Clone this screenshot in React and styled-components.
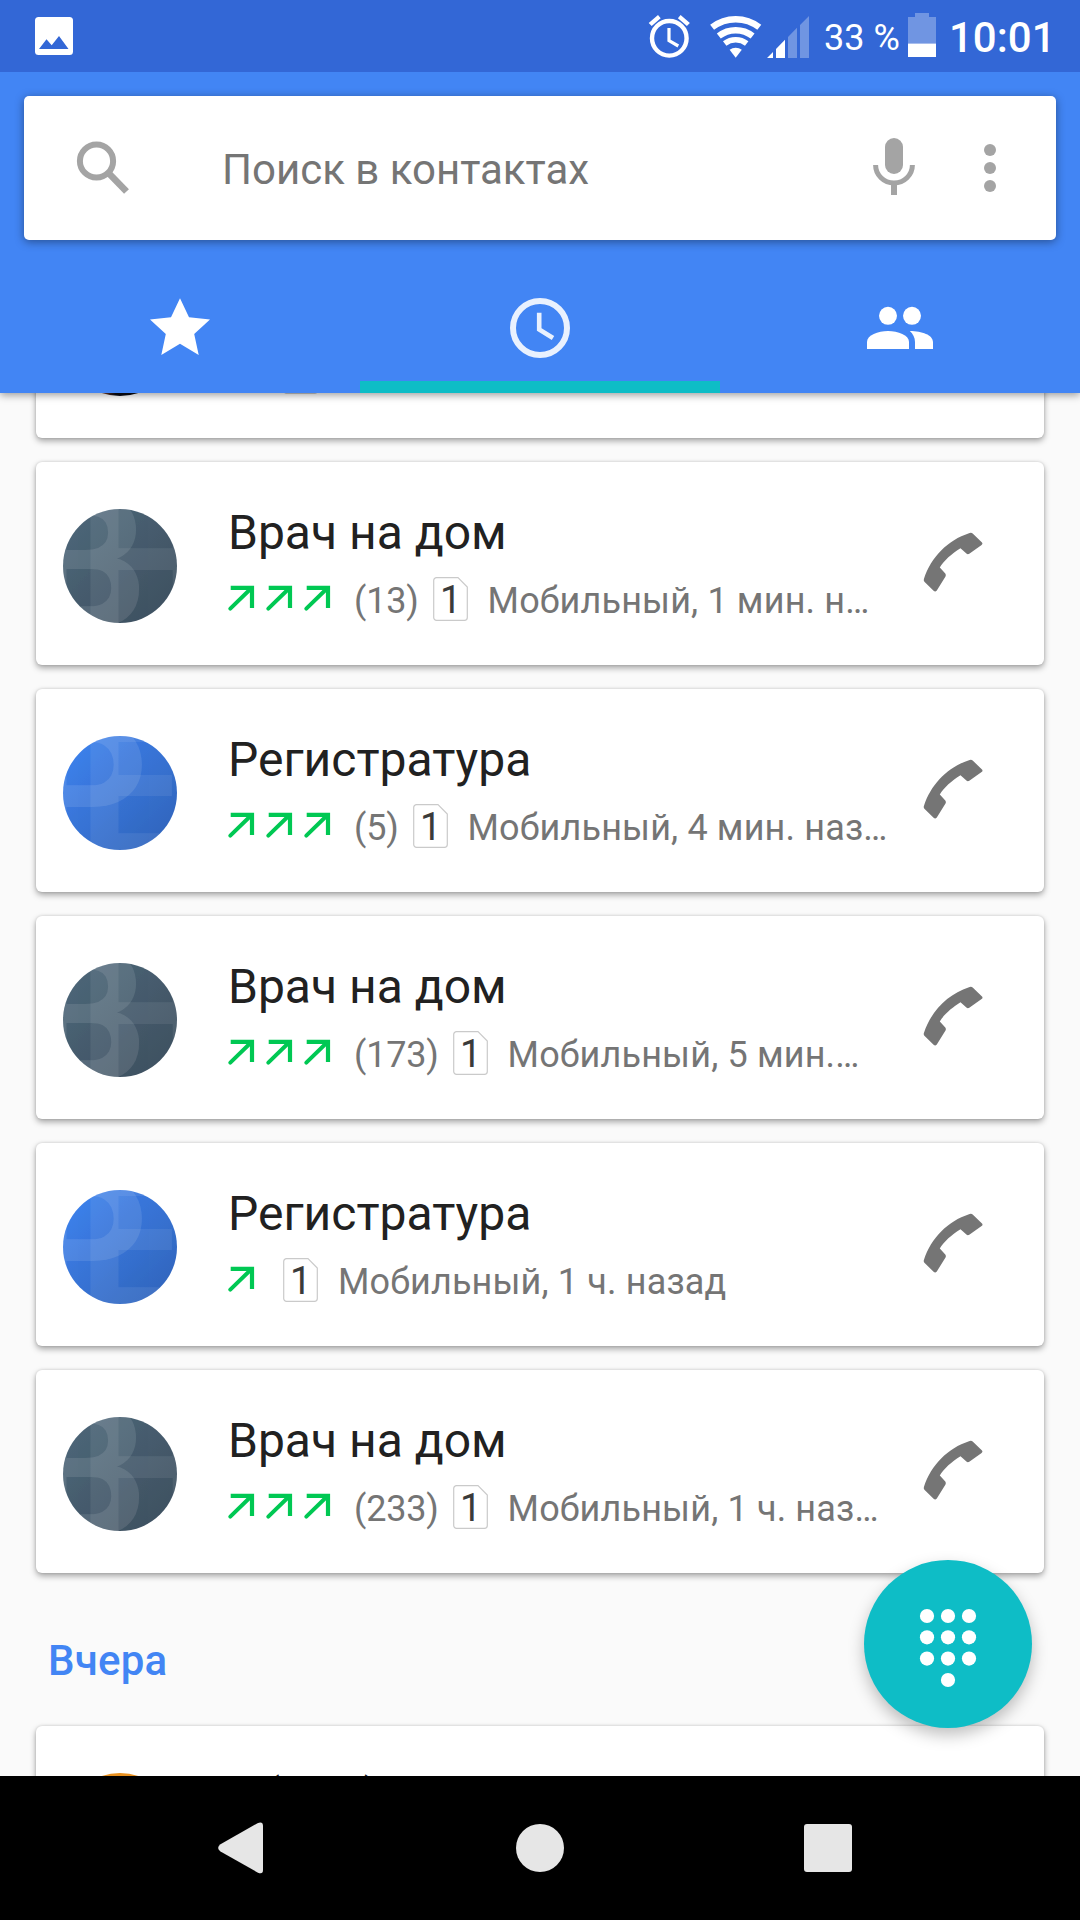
import React from 'react';
import styled, { createGlobalStyle } from 'styled-components';

const GlobalStyle = createGlobalStyle`
  * {
    box-sizing: border-box;
  }
  body {
    margin: 0;
    background: #000;
    font-family: Roboto, "Noto Sans", sans-serif;
  }
  svg {
    display: block;
    flex-shrink: 0;
    overflow: visible;
  }
`;

const Screen = styled.div`
  width: 1080px;
  height: 1920px;
  display: flex;
  flex-direction: column;
  overflow: hidden;
  background: #fafafa;
`;

const StatusBar = styled.div`
  position: relative;
  z-index: 3;
  height: 72px;
  flex-shrink: 0;
  display: flex;
  align-items: flex-start;
  padding: 0 28px 0 35px;
  background: #3367d6;
  color: #fff;
`;

const StatusIcon = styled.span`
  margin-top: ${({ $top }) => $top}px;
  margin-left: ${({ $left }) => $left || 0}px;
`;

const StatusText = styled.span`
  width: ${({ $width }) => $width}px;
  margin-left: ${({ $left }) => $left}px;
  font-size: ${({ $size }) => $size}px;
  font-weight: ${({ $weight }) => $weight || 400};
  line-height: 76px;
  white-space: nowrap;
`;

const Spacer = styled.div`
  flex: 1;
`;

const Header = styled.header`
  position: relative;
  z-index: 2;
  flex-shrink: 0;
  height: 321px;
  padding-top: 24px;
  display: flex;
  flex-direction: column;
  background: #4285f4;
  box-shadow: 0 2px 8px rgba(0, 0, 0, 0.4);
`;

const SearchBox = styled.div`
  height: 144px;
  margin: 0 24px;
  padding: 0 60px 0 53px;
  display: flex;
  align-items: center;
  border-radius: 5px;
  background: #fff;
  box-shadow: 0 2px 10px rgba(0, 0, 0, 0.4);
  color: #a4a4a4;
`;

const SearchHint = styled.span`
  flex: 1;
  margin-left: 92px;
  padding-top: 4px;
  font-size: 42px;
  line-height: 50px;
  color: #757575;
`;

const MicSlot = styled.span`
  margin-right: 68px;
`;

const Tabs = styled.nav`
  flex: 1;
  display: grid;
  grid-template-columns: repeat(3, 1fr);
`;

const Tab = styled.div`
  display: flex;
  justify-content: center;
  align-items: center;
  padding-top: 35px;
  border-bottom: 12px solid ${({ $active }) => ($active ? '#0ebdc6' : 'transparent')};
  color: ${({ $active }) => ($active ? '#e9f1fe' : '#fff')};
`;

const Content = styled.main`
  position: relative;
  flex: 1;
  min-height: 0;
  overflow: hidden;
`;

// the list is scrolled, so its first card is mostly under the header
const CallList = styled.div`
  margin-top: -158px;
  padding: 0 36px;
  display: flex;
  flex-direction: column;
  gap: 24px;
`;

const Card = styled.article`
  height: 203px;
  flex-shrink: 0;
  padding: 5px 61px 0 27px;
  display: flex;
  align-items: center;
  border-radius: 6px;
  background: #fff;
  box-shadow: 0 3px 6px rgba(0, 0, 0, 0.34), 0 0 3px rgba(0, 0, 0, 0.14);
`;

const AvatarCircle = styled.div`
  width: 114px;
  height: 114px;
  flex-shrink: 0;
  overflow: hidden;
  border-radius: 50%;
  background: ${({ $background }) => $background};
`;

const CallInfo = styled.div`
  flex: 1;
  min-width: 0;
  height: 120px;
  margin-left: 50px;
  display: flex;
  flex-direction: column;
`;

const Name = styled.div`
  height: 58px;
  padding-left: 1px;
  font-size: 48px;
  line-height: 54px;
  color: #212121;
  white-space: pre;
`;

const Details = styled.div`
  height: 44px;
  margin-top: 13px;
  display: flex;
  align-items: center;
  font-size: 36px;
  line-height: 44px;
  color: #757575;
  white-space: nowrap;
`;

const Arrows = styled.span`
  display: flex;
  gap: 12px;
  padding: 0 12px 2px 1px;
`;

const Count = styled.span`
  margin: 0 -3px 0 12px;
  padding-top: 4px;
  letter-spacing: -0.2px;
`;

const SimSlot = styled.span`
  margin: 0 20px 0 17px;
`;

const DetailText = styled.span`
  padding-top: 4px;
  letter-spacing: 0.15px;
`;

const CallButton = styled.span`
  margin-bottom: 8px;
`;

const SectionTitle = styled.h2`
  height: 105px;
  margin: 0;
  padding: 0 12px;
  font-size: 42px;
  font-weight: 500;
  line-height: 127px;
  letter-spacing: 0.2px;
  color: #4285f4;
`;

const DialButton = styled.button`
  position: absolute;
  right: 48px;
  bottom: 48px;
  width: 168px;
  height: 168px;
  padding: 8px 0 0;
  display: flex;
  align-items: center;
  justify-content: center;
  border: 0;
  border-radius: 50%;
  background: #0ebdc6;
  box-shadow: 0 7px 16px rgba(0, 0, 0, 0.25);
`;

const NavBar = styled.footer`
  position: relative;
  height: 144px;
  flex-shrink: 0;
  padding: 0 216px;
  display: grid;
  grid-template-columns: 48px 48px 48px;
  align-items: center;
  justify-content: space-between;
  background: #000;
`;

const RecentsSlot = styled.span`
  margin-left: -12px;
`;

const PhotoIcon = () => (
  <svg width="38" height="38" viewBox="0 0 38 38">
    <rect width="38" height="38" rx="3.5" fill="#fff" />
    <path d="M4 32 11.5 22.3 16.7 28.3 24 19 33.5 32Z" fill="#3367d6" />
  </svg>
);

const AlarmIcon = () => (
  <svg width="43" height="44" viewBox="0 0 43 44" fill="none" stroke="#fff">
    <circle cx="21.3" cy="24.3" r="17.3" strokeWidth="4.4" />
    <path d="M21 14V26.6L30.3 32" strokeWidth="3.2" />
    <path d="M.7 9 10 1 12.7 4.3 3.7 12ZM41.9 9 32.6 1 29.9 4.3 38.9 12Z" fill="#fff" stroke="none" />
  </svg>
);

const WifiIcon = () => (
  <svg width="51" height="43" viewBox="0 0 51 43" fill="none" stroke="#fff">
    <path d="M2.1 12.3A38.5 38.5 0 0 1 49.3 12.3M8.8 21A27.5 27.5 0 0 1 42.6 21" strokeWidth="6.4" />
    <path d="M14.7 28.5A18 18 0 0 1 36.7 28.5" strokeWidth="5.6" />
    <path d="M19.6 34.8A10 10 0 0 1 31.8 34.8L25.7 42.7Z" fill="#fff" stroke="none" />
  </svg>
);

const SignalIcon = () => (
  <svg width="42" height="43" viewBox="0 0 42 43" fill="#fff">
    <path d="M0 43 6 37V43ZM9 43V34L18 24.7V43Z" />
    <path d="M21 43V22L30 12.7V43ZM33 43V10L42 1V43Z" opacity=".3" />
  </svg>
);

const BatteryIcon = () => (
  <svg width="28" height="44" viewBox="0 0 28 44" fill="#fff">
    <path d="M0 4H7V0H21V4H28V30.5H0Z" opacity=".3" />
    <path d="M0 30.5H28V44H0Z" />
  </svg>
);

const SearchIcon = () => (
  <svg width="53" height="54" viewBox="0 0 53 54" fill="none" stroke="currentColor">
    <circle cx="19.5" cy="20" r="16.6" strokeWidth="6" />
    <path d="M32.5 33 49.5 50.5" strokeWidth="6.8" />
  </svg>
);

const MicIcon = () => (
  <svg width="44" height="60" viewBox="0 0 44 60">
    <rect x="13" y="0" width="18" height="36" rx="9" fill="currentColor" />
    <path d="M3.6 27A18.4 18 0 0 0 40.4 27" fill="none" stroke="currentColor" strokeWidth="5" />
    <path d="M19 45H25V57H19Z" fill="currentColor" />
  </svg>
);

const MoreIcon = () => (
  <svg width="12" height="48" viewBox="0 0 12 48" fill="currentColor">
    <circle cx="6" cy="6" r="6" />
    <circle cx="6" cy="24" r="6" />
    <circle cx="6" cy="42" r="6" />
  </svg>
);

const StarIcon = () => (
  <svg width="60" height="60" viewBox="0 0 60 60" fill="currentColor">
    <path d="M30 .3 39 19.3 60 21.6 44.2 36 48.7 57 30 45.7 11.3 57 15.8 36 0 21.6 21 19.3Z" />
  </svg>
);

const ClockIcon = () => (
  <svg width="60" height="60" viewBox="0 0 60 60" fill="none" stroke="currentColor">
    <circle cx="30" cy="30" r="27" strokeWidth="6" />
    <path d="M29.2 14.7V31.5L43 40" strokeWidth="4.6" />
  </svg>
);

const PeopleIcon = () => (
  <svg width="66" height="42" viewBox="0 0 66 42" fill="currentColor">
    <circle cx="21" cy="8.8" r="9" />
    <circle cx="45" cy="8.8" r="9" />
    <path d="M0 42V35C0 28 11 24 21 24S42 28 42 35V42Z" />
    <path d="M42.8 24C55 24 66 28 66 35V42H48V35C48 30.5 46 27 42.8 24Z" />
  </svg>
);

const OutgoingArrow = () => (
  <svg width="26" height="26" viewBox="0 0 26 26" fill="none" stroke="#00c853">
    <path d="M2.3 23.6 23.5 3" strokeWidth="4" strokeLinecap="round" />
    <path d="M2.7 2.8H24V23" strokeWidth="4.2" />
  </svg>
);

const SimIcon = () => (
  <svg width="35" height="44" viewBox="0 0 35 44">
    <path
      d="M3.5 .7H25L34.3 10V40.5A2.8 2.8 0 0 1 31.5 43.3H3.5A2.8 2.8 0 0 1 .7 40.5V3.5A2.8 2.8 0 0 1 3.5 .7Z"
      fill="none"
      stroke="#cacaca"
      strokeWidth="1.2"
    />
    <text x="7" y="36" fontSize="38" fill="#3a3a3a">1</text>
  </svg>
);

const PhoneIcon = () => (
  <svg width="60" height="60" viewBox="0 0 60 60">
    <path
      d="M46 1.2Q48.4 .2 50.2 2L59 10.6Q60.2 12 58.6 13L46.3 21.8Q44.7 22.8 43.4 21.6L37.5 16.3C29 21.5 20.5 29 16.8 35.5L22.3 41.6Q23.3 43 22.5 44.5L13.8 58.4Q12.3 60.4 10.6 58.7L1.4 49.8Q.4 48.6 .9 47C8 25 25 8 46 1.2Z"
      fill="#757575"
    />
  </svg>
);

const DialpadIcon = () => (
  <svg width="58" height="80" viewBox="0 0 58 80" fill="#fff">
    {[8, 29.3, 50.6].map((y) => [8, 29, 50].map((x) => <circle key={`${x}-${y}`} cx={x} cy={y} r="7.1" />))}
    <circle cx="29" cy="72" r="7.1" />
  </svg>
);

const BackIcon = () => (
  <svg width="48" height="52" viewBox="-1 0 48 52" fill="#e6e6e6">
    <path d="M40.5 1.2Q46 -1 46 4V48Q46 53 40.5 50.4L3.5 29.5Q-1.2 26 3.5 22.3Z" />
  </svg>
);

const HomeIcon = () => (
  <svg width="48" height="48" viewBox="0 0 48 48">
    <circle cx="24" cy="24" r="24" fill="#e6e6e6" />
  </svg>
);

const RecentsIcon = () => (
  <svg width="48" height="48" viewBox="0 0 48 48">
    <rect width="48" height="48" rx="3" fill="#e6e6e6" />
  </svg>
);

const avatars = {
  doctor: { background: 'linear-gradient(135deg, #4c6577 15%, #3f5161 90%)', letters: ['В', 'Н'] },
  registry: { background: 'linear-gradient(135deg, #3d80ea 12%, #3266bd 90%)', letters: ['Р', 'Е'] },
  photo: { background: 'linear-gradient(100deg, #6b3a2c 46%, #0a0a14 54%)' },
  orange: { background: '#e8901f' },
};

// Two oversized initials laid over each other as a watermark
const Avatar = ({ kind }) => {
  const { background, letters } = avatars[kind];
  return (
    <AvatarCircle $background={background}>
      {letters && (
        <svg width="114" height="114" viewBox="0 0 114 114" fill="#fff" fontSize="190" fontWeight="700">
          <text x="-36.6" y="119" opacity=".1">{letters[0]}</text>
          <text x="15.6" y="119" opacity=".07">{letters[1]}</text>
        </svg>
      )}
    </AvatarCircle>
  );
};

const todayCalls = [
  { avatar: 'photo', name: '', arrows: 1, details: '' },
  { avatar: 'doctor', name: 'Врач на дом', arrows: 3, count: 13, details: 'Мобильный, 1 мин. н…' },
  { avatar: 'registry', name: 'Регистратура', arrows: 3, count: 5, details: 'Мобильный, 4 мин. наз…' },
  { avatar: 'doctor', name: 'Врач на дом', arrows: 3, count: 173, details: 'Мобильный, 5 мин.…' },
  { avatar: 'registry', name: 'Регистратура', arrows: 1, details: 'Мобильный, 1 ч. назад' },
  { avatar: 'doctor', name: 'Врач на дом', arrows: 3, count: 233, details: 'Мобильный, 1 ч. наз…' },
];

const yesterdayCalls = [
  { avatar: 'orange', name: '   (       )', arrows: 1, details: '' },
];

const CallCard = ({ call }) => (
  <Card>
    <Avatar kind={call.avatar} />
    <CallInfo>
      <Name>{call.name}</Name>
      <Details>
        <Arrows>
          {Array(call.arrows).fill(0).map((_, idx) => <OutgoingArrow key={idx} />)}
        </Arrows>
        {call.count && <Count>({call.count})</Count>}
        <SimSlot><SimIcon /></SimSlot>
        <DetailText>{call.details}</DetailText>
      </Details>
    </CallInfo>
    <CallButton><PhoneIcon /></CallButton>
  </Card>
);

const App = () => (
  <>
    <GlobalStyle />
    <Screen>
      <StatusBar>
        <StatusIcon $top={17}><PhotoIcon /></StatusIcon>
        <Spacer />
        <StatusIcon $top={14}><AlarmIcon /></StatusIcon>
        <StatusIcon $top={15} $left={19}><WifiIcon /></StatusIcon>
        <StatusIcon $top={15} $left={6}><SignalIcon /></StatusIcon>
        <StatusText $size={36} $left={15} $width={76}>33 %</StatusText>
        <StatusIcon $top={13} $left={8}><BatteryIcon /></StatusIcon>
        <StatusText $size={42} $weight={500} $left={13} $width={103}>10:01</StatusText>
      </StatusBar>
      <Header>
        <SearchBox>
          <SearchIcon />
          <SearchHint>Поиск в контактах</SearchHint>
          <MicSlot><MicIcon /></MicSlot>
          <MoreIcon />
        </SearchBox>
        <Tabs>
          <Tab><StarIcon /></Tab>
          <Tab $active><ClockIcon /></Tab>
          <Tab><PeopleIcon /></Tab>
        </Tabs>
      </Header>
      <Content>
        <CallList>
          {todayCalls.map((call, idx) => <CallCard key={idx} call={call} />)}
          <SectionTitle>Вчера</SectionTitle>
          {yesterdayCalls.map((call, idx) => <CallCard key={idx} call={call} />)}
        </CallList>
        <DialButton aria-label="Набор номера"><DialpadIcon /></DialButton>
      </Content>
      <NavBar>
        <BackIcon />
        <HomeIcon />
        <RecentsSlot><RecentsIcon /></RecentsSlot>
      </NavBar>
    </Screen>
  </>
);

export default App;
